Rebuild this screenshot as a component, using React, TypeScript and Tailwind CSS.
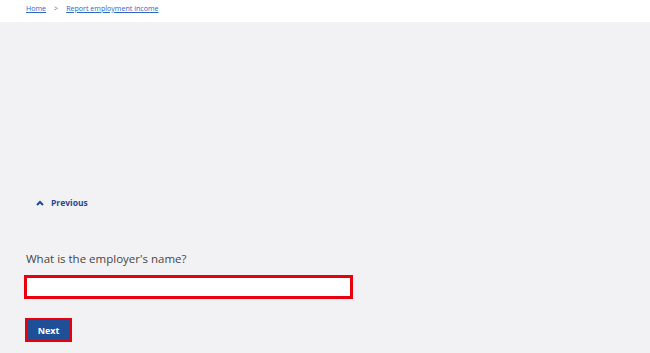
import React from "react";

export default function App() {
  return (
    <div className="w-[650px] h-[353px] bg-[#f2f2f4] flex flex-col" style={{ fontFamily: '"Open Sans", "Noto Sans", sans-serif' }}>
      <div className="h-[22px] bg-white flex items-start pl-[26px] pt-[3px] text-[7.1px] text-[#2f66c4]">
        <a className="underline">Home</a>
        <span className="mx-[8px] text-[#666]">&gt;</span>
        <a className="underline">Report employment income</a>
      </div>
      <div className="flex items-center gap-[7px] pl-[36px] mt-[175px] text-[#1d4b91] font-bold text-[8.5px]">
        <svg width="8" height="6" viewBox="0 0 8 6"><path d="M1 5 L4 2 L7 5" stroke="#1d4b91" strokeWidth="2" fill="none" /></svg>
        <span>Previous</span>
      </div>
      <div className="pl-[26px] mt-[43px] text-[11.5px] text-[#454545] leading-none">What is the employer's name?</div>
      <div className="ml-[24px] mt-[11px] w-[329px] h-[24px] bg-white border-[3px] border-[#e8000d]"></div>
      <div className="ml-[25px] mt-[19px] w-[47px] h-[24px] border-2 border-[#e8000d] bg-[#1f4f96] flex items-center justify-center text-white font-bold text-[9px]">Next</div>
    </div>
  );
}
